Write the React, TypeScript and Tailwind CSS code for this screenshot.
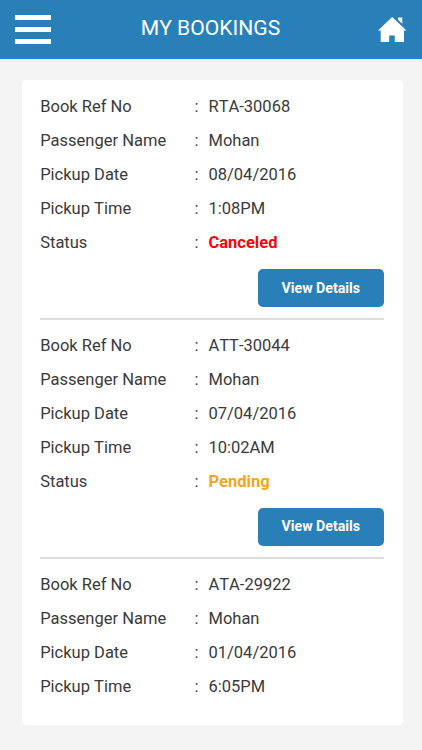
type Booking = {
    refNo: string;
    passenger: string;
    date: string;
    time: string;
    status?: string;
    statusColor?: string;
};

const bookings: Booking[] = [
    {refNo: "RTA-30068", passenger: "Mohan", date: "08/04/2016", time: "1:08PM", status: "Canceled", statusColor: "text-[#ee0a0a]"},
    {refNo: "ATT-30044", passenger: "Mohan", date: "07/04/2016", time: "10:02AM", status: "Pending", statusColor: "text-[#f5a51d]"},
    {refNo: "ATA-29922", passenger: "Mohan", date: "01/04/2016", time: "6:05PM"},
];

function Row({label, value, valueClass = ""}: { label: string; value: string; valueClass?: string }) {
    return (
        <div className="flex h-[34.1px] items-center text-[16.5px] text-[#3a3a3a]">
            <span className="w-[154.3px]">{label}</span>
            <span className="w-[14px]">:</span>
            <span className={valueClass}>{value}</span>
        </div>
    )
}

function BookingItem({booking}: { booking: Booking }) {
    return (
        <section className="pt-[9px]">
            <Row label="Book Ref No" value={booking.refNo}/>
            <Row label="Passenger Name" value={booking.passenger}/>
            <Row label="Pickup Date" value={booking.date}/>
            <Row label="Pickup Time" value={booking.time}/>
            {booking.status && (
                <>
                    <Row label="Status" value={booking.status} valueClass={`font-bold ${booking.statusColor}`}/>
                    <div className="flex h-[59.4px] items-start justify-end border-b-2 border-[#dedede] pt-[8.5px]">
                        <button className="h-[38px] w-[126px] rounded-[5px] bg-[#2980b9] text-[14.2px] font-bold text-white">
                            View Details
                        </button>
                    </div>
                </>
            )}
        </section>
    )
}

export default function App() {
    return (
        <div className="h-[750px] overflow-hidden bg-[#f4f4f4] font-['Roboto',sans-serif] [font-kerning:none]">
            <header className="flex h-[59px] items-center justify-between bg-[#2980b9] pl-[15px] pr-[15.5px] text-white">
                <button className="flex w-9 flex-col gap-[7px]" aria-label="Menu">
                    <span className="h-[5px] bg-white"/>
                    <span className="h-[5px] bg-white"/>
                    <span className="h-[5px] bg-white"/>
                </button>
                <h1 className="-ml-[7.5px] -mt-[4px] text-[21.1px]">MY BOOKINGS</h1>
                <svg className="h-[27px] w-[29px]" viewBox="0 0 29 27" fill="currentColor">
                    <path d="M14.2 1 0 14.5h2.7V26h8.5v-6.5h5.6V26H26V14.5h2.5zM20 1.5h4.3v6.2L20 3.7z"/>
                </svg>
            </header>
            <main className="ml-[21.5px] mr-[19.5px] mt-[21px] h-[645px] rounded-[4px] bg-white px-[18.7px] pt-[1.2px]">
                {bookings.map((booking) => <BookingItem key={booking.refNo} booking={booking}/>)}
            </main>
        </div>
    )
}
